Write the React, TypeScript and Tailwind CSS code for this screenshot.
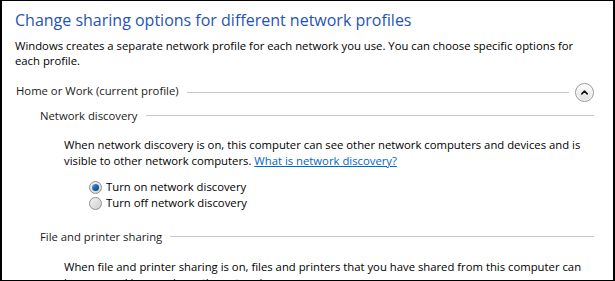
function SectionLine({ className = '' }: { className?: string }) {
  return <div className={`h-px flex-1 bg-[#c9c9c9] ${className}`} />;
}

function Radio({ checked }: { checked?: boolean }) {
  return (
    <span className="flex h-[13px] w-[13px] shrink-0 items-center justify-center rounded-full border border-[#8f8f8f] bg-gradient-to-br from-[#f4f4f4] to-[#cfcfcf]">
      {checked && (
        <span className="h-[7px] w-[7px] rounded-full bg-gradient-to-br from-[#5aa6e8] via-[#1a63b0] to-[#0b3f7a]" />
      )}
    </span>
  );
}

function ChevronButton() {
  return (
    <button className="ml-[6px] flex h-[19px] w-[19px] shrink-0 items-center justify-center rounded-full border border-[#9a9a9a] bg-gradient-to-b from-white to-[#dedede] shadow-[inset_0_0_0_1px_rgba(255,255,255,0.8)]">
      <svg viewBox="0 0 10 10" className="h-[9px] w-[9px]">
        <path d="M2 6.5 L5 3.5 L8 6.5" fill="none" stroke="#111" strokeWidth="1.8" strokeLinecap="round" strokeLinejoin="round" />
      </svg>
    </button>
  );
}

export default function App() {
  return (
    <div className="h-[281px] w-[615px] overflow-hidden border-x-2 border-y border-black bg-white font-['Open_Sans',sans-serif] text-[11.3px] text-black">
      <div className="pl-[13px] pr-[19px] pt-[9px]">
        <h1 className="whitespace-nowrap text-[16px] leading-[21px] text-[#1f53b8]">
          Change sharing options for different network profiles
        </h1>
        <p className="mt-[7px] whitespace-nowrap leading-[15px]">
          Windows creates a separate network profile for each network you use. You can choose specific options for
          <br />
          each profile.
        </p>

        <div className="mt-[15px] flex h-[19px] items-center">
          <span className="mb-[4px] whitespace-nowrap pl-px leading-[15px] text-[#1a1a1a]">Home or Work (current profile)</span>
          <SectionLine className="ml-[8px]" />
          <ChevronButton />
        </div>

        <div className="ml-[25px] mt-[6px] flex items-center">
          <span className="whitespace-nowrap leading-[15px] text-[#1a1a1a]">Network discovery</span>
          <SectionLine className="ml-[8px]" />
        </div>

        <p className="ml-[49px] mt-[14px] whitespace-nowrap leading-[16px]">
          When network discovery is on, this computer can see other network computers and devices and is
          <br />
          visible to other network computers.{' '}
          <a href="#" className="text-[#0066cc] underline">
            What is network discovery?
          </a>
        </p>

        <div className="ml-[74px] mt-[10px] flex flex-col">
          <label className="flex h-[16px] items-center gap-[4px] whitespace-nowrap leading-[16px]">
            <Radio checked />
            Turn on network discovery
          </label>
          <label className="flex h-[16px] items-center gap-[4px] whitespace-nowrap leading-[16px]">
            <Radio />
            Turn off network discovery
          </label>
        </div>

        <div className="ml-[25px] mt-[18px] flex items-center">
          <span className="whitespace-nowrap leading-[15px] text-[#1a1a1a]">File and printer sharing</span>
          <SectionLine className="ml-[8px]" />
        </div>

        <p className="ml-[49px] mt-[15px] whitespace-nowrap leading-[16px]">
          When file and printer sharing is on, files and printers that you have shared from this computer can
          <br />
          be accessed by people on the network.
        </p>
      </div>
    </div>
  );
}
